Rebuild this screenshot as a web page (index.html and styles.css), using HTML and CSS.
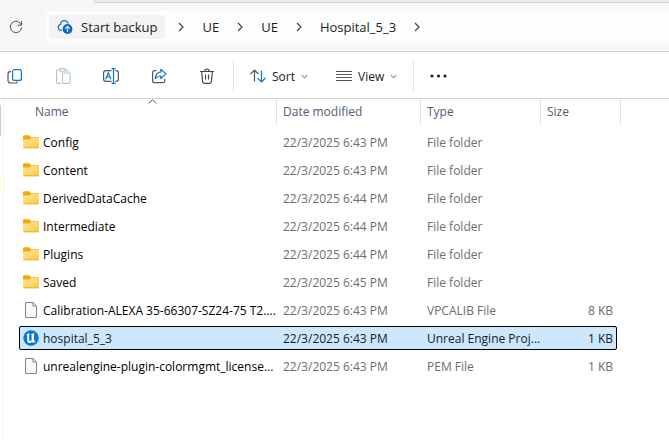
FILE: index.html
```
<!DOCTYPE html>
<html lang="en">
<head>
<meta charset="utf-8">
<title>Hospital_5_3</title>
<link rel="stylesheet" href="styles.css">
</head>
<body>
<svg class="defs" aria-hidden="true">
  <defs>
    <linearGradient id="folder-fill" x1="0" y1="0" x2="1" y2="1">
      <stop offset="0" stop-color="#ffe8a2"/>
      <stop offset="1" stop-color="#fbc93d"/>
    </linearGradient>
    <symbol id="chevron" viewBox="0 0 6 10"><path d="M1 1l4 4-4 4" fill="none" stroke="#444" stroke-width="1.2"/></symbol>
    <symbol id="caret" viewBox="0 0 7 5"><path d="M.8 1l2.700 2.700L6.200 1" fill="none" stroke="#999" stroke-width="1.100"/></symbol>
    <symbol id="folder" viewBox="0 0 16 14">
      <path d="M0 1.500Q0 .3 1.200 .3H6q.8 0 1.300 .9L8 2.300h7q1 0 1 1V7H0z" fill="#f3ac0c"/>
      <path d="M0 4.600h6.500L8 3h7.200q.8 0 .8.800v8.400q0 1-1 1H1q-1 0-1-1z" fill="url(#folder-fill)"/>
      <path d="M.3 12.800h15.400" stroke="#e5a72b" stroke-width=".8"/>
    </symbol>
    <symbol id="file" viewBox="0 0 12 16">
      <path d="M.5.5h7.600l3.400 3.400v11.600H.5z" fill="#f9f9f9" stroke="#858585"/>
      <path d="M8 .5v3.500h3.500" fill="none" stroke="#858585"/>
    </symbol>
    <symbol id="unreal" viewBox="0 0 16 16">
      <circle cx="8" cy="8" r="7.700" fill="#0877d1"/>
      <path d="M3 5.400Q4 3.500 6.500 2.900L6.200 3.800V10q0 1 .9 1 .8 0 1.500-.8V5L7.900 4.300Q9.500 3.900 11.500 2.800L11 4v6.200q0 .7.600.7.700 0 1.600-.6Q12 12.200 10 13.100l-1-1.300Q8 13.100 6.800 13.100 4.200 13 4.200 10.500V5.300q-.5-.4-1.200.1z" fill="#fff"/>
    </symbol>
  </defs>
</svg>

<div class="tabstrip"></div>

<header class="address">
  <button class="refresh" type="button" aria-label="Refresh">
    <svg width="14" height="14" viewBox="0 0 14 14" fill="none" stroke="#555" stroke-width="1"><path d="M12.400 5A5.700 5.700 0 1 0 12.700 7.500M12.600 1v4.200H8.500"/></svg>
  </button>
  <nav class="crumbs" aria-label="Path">
    <button class="backup" type="button">
      <svg width="16" height="16" viewBox="0 0 16 16"><path d="M5 11.300H3.800A3 3 0 0 1 3.500 5.400Q4 1.700 7.500 1.700q2.800 0 3.700 3" fill="none" stroke="#1a78c8" stroke-width="1.200"/><circle cx="10.500" cy="10" r="4.900" fill="#1068bd"/><path d="M10.500 13V7.500M8.200 9.600l2.300-2.300 2.300 2.300" fill="none" stroke="#cce8ff" stroke-width="1.200"/></svg>
      <span>Start backup</span>
    </button>
    <svg class="sep" width="6" height="10"><use href="#chevron"/></svg>
    <a href="#">UE</a>
    <svg class="sep" width="6" height="10"><use href="#chevron"/></svg>
    <a href="#">UE</a>
    <svg class="sep" width="6" height="10"><use href="#chevron"/></svg>
    <a href="#">Hospital_5_3</a>
    <svg class="sep" width="6" height="10"><use href="#chevron"/></svg>
  </nav>
</header>

<div class="toolbar" role="toolbar" aria-label="Commands">
  <div class="icons">
    <button type="button" aria-label="Copy"><svg width="16" height="16" viewBox="0 0 16 16" fill="none" stroke-width="1.200"><path d="M4 3.600H3Q1 3.800 1 6v6.500Q1 15 3.500 15h5q1.500 0 2-1.500" stroke="#555"/><rect x="5.600" y="1.600" width="8.800" height="10.800" rx="2" stroke="#0f78d0"/></svg></button>
    <button type="button" aria-label="Paste" disabled><svg width="16" height="16" viewBox="0 0 16 16" fill="none" stroke-width="1.100"><path d="M4.500 2H2.800Q1.600 2 1.600 3.200v11q0 1.200 1.200 1.200H6M11 2h.8Q13 2 13 3.200V4" stroke="#bdbdbd"/><rect x="4.600" y=".6" width="6" height="2.600" rx="1.200" stroke="#bdbdbd"/><rect x="7.500" y="5" width="7.500" height="10.400" rx="1" stroke="#9dcbec"/></svg></button>
    <button type="button" aria-label="Rename"><svg width="16" height="16" viewBox="0 0 16 16" fill="none" stroke-width="1.200"><path d="M8.500 2.600H3Q.6 2.600.6 5v6q0 2.400 2.400 2.400h5.500M12.500 2.600h.5q2.400 0 2.400 2.400v6q0 2.400-2.400 2.400h-.5" stroke="#555"/><path d="M10.500.6v14.800M8.500.6h4M8.500 15.400h4M2.700 11.300L5.300 4.700l2.600 6.600M3.500 9h3.600" stroke="#0f78d0"/></svg></button>
    <button type="button" aria-label="Share"><svg width="16" height="16" viewBox="0 0 16 16" fill="none" stroke-width="1.200" stroke-linejoin="round"><path d="M5.500 2.600H3.500Q1.600 2.600 1.600 4.700v7.800q0 2.100 2.100 2.100h8q2.100 0 2.100-2.100V11" stroke="#555"/><path d="M9.800 1.300L15 5.900l-5.200 4.600V8Q6.200 7.800 4.200 10.700 4.700 4.400 9.800 3.900z" stroke="#0f78d0"/></svg></button>
    <button type="button" aria-label="Delete"><svg width="16" height="16" viewBox="0 0 16 16" fill="none" stroke="#444" stroke-width="1.200"><path d="M1 3.500h14M5.800 3.500Q5.800 1 8 1t2.200 2.500M2.600 3.500l1 10q.2 1.900 1.900 1.900h5q1.700 0 1.900-1.900l1-10M6.500 6.500v5M9.500 6.500v5"/></svg></button>
  </div>
  <div class="group">
    <button class="menu" type="button">
      <svg width="16" height="14" viewBox="0 0 16 14" fill="none" stroke-width="1.200"><path d="M4.500 12.500V1M.5 5l4-4 4 4" stroke="#555"/><path d="M11.500 1.500V13M7.500 9l4 4 4-4" stroke="#0f78d0"/></svg>
      <span>Sort</span>
      <svg width="7" height="5"><use href="#caret"/></svg>
    </button>
    <button class="menu" type="button">
      <svg width="16" height="12" viewBox="0 0 16 12" stroke="#555"><path d="M0 1.500h16M0 4.500h16M0 7.500h16M0 10.500h16"/></svg>
      <span>View</span>
      <svg width="7" height="5"><use href="#caret"/></svg>
    </button>
  </div>
  <button class="more" type="button" aria-label="See more"><svg width="17" height="4" viewBox="0 0 17 4" fill="#222"><circle cx="2" cy="2" r="1.600"/><circle cx="8.500" cy="2" r="1.600"/><circle cx="15" cy="2" r="1.600"/></svg></button>
</div>

<main class="body">
  <aside class="side"><div class="thumb"></div><div class="mark"></div></aside>
  <table class="files">
    <thead>
      <tr><th class="sorted">Name<svg class="sort" width="9" height="5" viewBox="0 0 9 5"><path d="M.7 4.500l3.800-3.800 3.800 3.800" fill="none" stroke="#555"/></svg></th><th>Date modified</th><th>Type</th><th>Size</th></tr>
    </thead>
    <tbody>
      <tr><td><svg width="16" height="14"><use href="#folder"/></svg><span>Config</span></td><td>22/3/2025 6:43 PM</td><td>File folder</td><td></td></tr>
      <tr><td><svg width="16" height="14"><use href="#folder"/></svg><span>Content</span></td><td>22/3/2025 6:43 PM</td><td>File folder</td><td></td></tr>
      <tr><td><svg width="16" height="14"><use href="#folder"/></svg><span>DerivedDataCache</span></td><td>22/3/2025 6:44 PM</td><td>File folder</td><td></td></tr>
      <tr><td><svg width="16" height="14"><use href="#folder"/></svg><span>Intermediate</span></td><td>22/3/2025 6:44 PM</td><td>File folder</td><td></td></tr>
      <tr><td><svg width="16" height="14"><use href="#folder"/></svg><span>Plugins</span></td><td>22/3/2025 6:44 PM</td><td>File folder</td><td></td></tr>
      <tr><td><svg width="16" height="14"><use href="#folder"/></svg><span>Saved</span></td><td>22/3/2025 6:45 PM</td><td>File folder</td><td></td></tr>
      <tr><td><svg width="16" height="16"><use href="#file"/></svg><span>Calibration-ALEXA 35-66307-SZ24-75 T2....</span></td><td>22/3/2025 6:43 PM</td><td>VPCALIB File</td><td>8 KB</td></tr>
      <tr class="selected"><td><svg width="16" height="16"><use href="#unreal"/></svg><span>hospital_5_3</span></td><td>22/3/2025 6:43 PM</td><td>Unreal Engine Proj...</td><td>1 KB</td></tr>
      <tr><td><svg width="16" height="16"><use href="#file"/></svg><span>unrealengine-plugin-colormgmt_license...</span></td><td>22/3/2025 6:43 PM</td><td>PEM File</td><td>1 KB</td></tr>
    </tbody>
  </table>
</main>
</body>
</html>
```
FILE: styles.css
```
* { box-sizing: border-box; }
body {
  margin: 0;
  min-height: 100vh;
  display: flex;
  flex-direction: column;
  background: #fff;
  color: #1b1b1b;
  font: 12px/16px "Segoe UI", "Open Sans", "Noto Sans", sans-serif;
  overflow-x: hidden;
}
.defs { position: absolute; width: 0; height: 0; }
svg { flex: none; }
button {
  border: 0;
  padding: 0;
  background: none;
  color: inherit;
  font: inherit;
  display: flex;
  align-items: center;
  justify-content: center;
}
.tabstrip {
  height: 3px;
  margin-left: 93px;
  background: #e9e9e9;
  border-bottom: 1px solid #d5d5d5;
  border-bottom-left-radius: 3px;
}
body::before { content: ""; position: absolute; z-index: -1; top: 0; left: 0; right: 0; height: 3px; background: #f7f7f7; }

.address {
  height: 49px;
  display: flex;
  align-items: center;
  background: #f7f7f7;
  border-bottom: 1px solid #d5d5d5;
}
.refresh { width: 32px; height: 32px; margin-right: 14px; }
.crumbs {
  flex: 1;
  height: 32px;
  padding-left: 3px;
  display: flex;
  align-items: center;
  background: #fdfdfd;
  border-radius: 4px 0 0 4px;
  font-size: 13px;
}
.crumbs a { color: inherit; text-decoration: none; }
.sep { margin: 0 18px; }
.backup {
  height: 24px;
  padding: 0 8px;
  gap: 8px;
  background: #f3f3f3;
  border-radius: 4px;
}
.backup + .sep { margin-left: 13px; }

.toolbar {
  height: 47px;
  padding-top: 2px;
  display: flex;
  align-items: center;
  border-bottom: 1px solid #d5d5d5;
}
.icons { display: flex; gap: 18px; margin-right: 11px; }
.icons button { width: 30px; height: 32px; }
.group {
  height: 32px;
  padding: 0 16px;
  display: flex;
  gap: 28px;
  border: solid #e6e6e6;
  border-width: 0 1px;
}
.menu { gap: 6px; }
.menu span { padding-top: 2px; }
.more { height: 32px; padding: 0 16px; }

.body { flex: 1; display: flex; }
.side { width: 4px; padding-top: 6px; border-right: 1px solid #f3f3f3; }
.thumb { width: 1px; height: 31px; background: #ccc; }
.mark { width: 1px; height: 10px; margin-top: 43px; background: #ffffa0; }

.files { display: block; flex: 1; margin-left: 15px; }
.files thead, .files tbody { display: block; }
.files tr {
  display: grid;
  grid-template-columns: 258px 144px 120px 80px;
}
.files th {
  height: 25px;
  padding: 5px 6px 4px;
  border-right: 1px solid #e2e2e2;
  color: #4c607a;
  font-weight: 400;
  text-align: left;
}
.files th:first-child { padding-left: 16px; }
.sorted { position: relative; }
.sort { position: absolute; top: 0; left: 129px; }
.files tbody { padding-top: 6px; }
.files tbody tr {
  width: 598px;
  height: 24px;
  margin-bottom: 4px;
  grid-template-columns: 258px 144px 120px 76px;
  border-radius: 2px;
}
.files td {
  padding: 5px 6px 3px;
  color: #6d6d6d;
  white-space: nowrap;
}
.files td:first-child {
  display: flex;
  align-items: center;
  gap: 4px;
  padding: 0 4px;
  color: #000;
}
.files td span { padding-top: 2px; }
.files td:last-child { padding-right: 4px; text-align: right; }
.files .selected { background: #cce8ff; outline: 1px solid #000; outline-offset: -1px; }
.files .selected td { color: #1b1b1b; }
```
